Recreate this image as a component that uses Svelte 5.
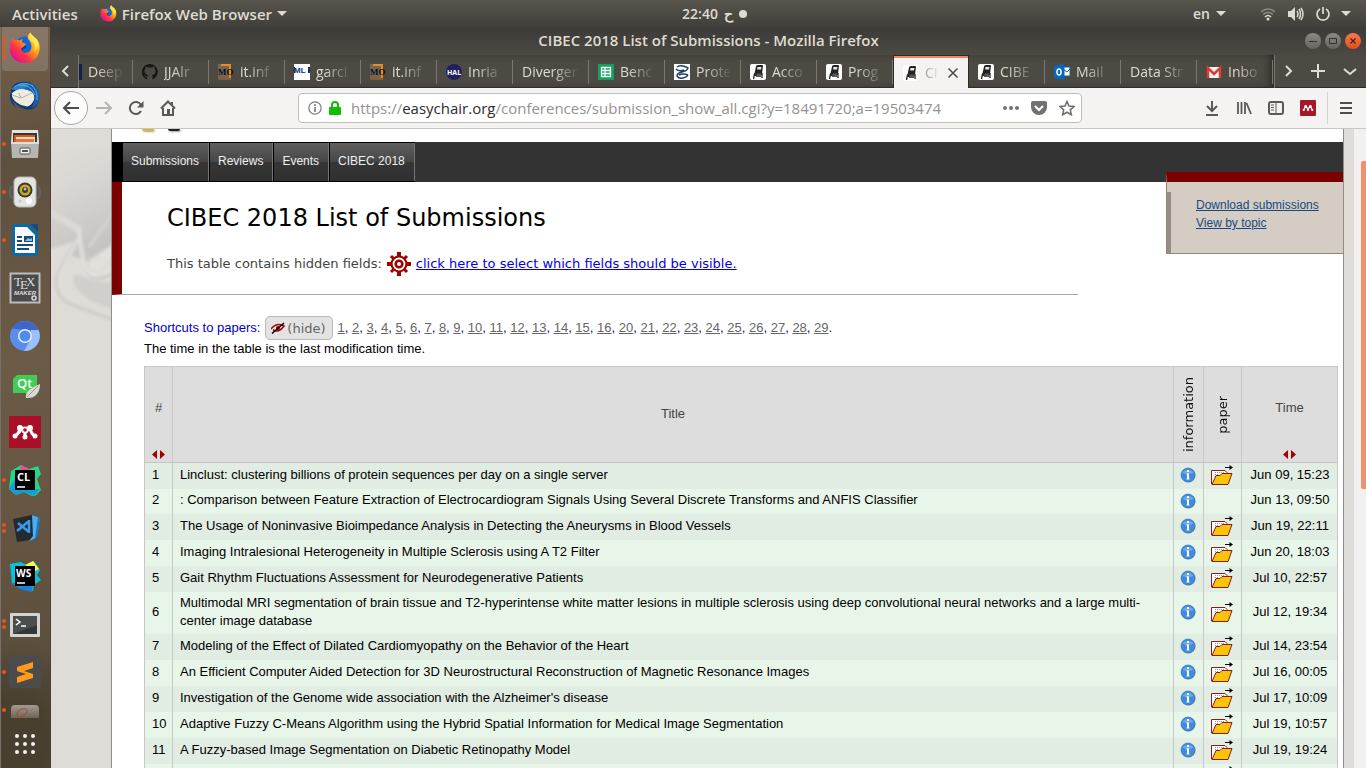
<script>
  const tabs = [
    { icon: 'deep', label: 'Deep' },
    { icon: 'github', label: 'JJAlr' },
    { icon: 'mo', label: 'it.inf' },
    { icon: 'pmlr', label: 'garci' },
    { icon: 'mo', label: 'it.inf' },
    { icon: 'hal', label: 'Inria' },
    { icon: '', label: 'Diverger' },
    { icon: 'sheet', label: 'Benc' },
    { icon: 'prot', label: 'Prote' },
    { icon: 'chair', label: 'Acco' },
    { icon: 'chair', label: 'Prog' },
    { icon: 'chair', label: 'CI', active: true },
    { icon: 'chair', label: 'CIBE' },
    { icon: 'outlook', label: 'Mail' },
    { icon: '', label: 'Data Str' },
    { icon: 'gmail', label: 'Inbo' }
  ];

  const dock = [
    { name: 'firefox', dots: 4, on: true },
    { name: 'thunderbird', dots: 0 },
    { name: 'files', dots: 1 },
    { name: 'music', dots: 1 },
    { name: 'writer', dots: 1 },
    { name: 'tex', dots: 0 },
    { name: 'chromium', dots: 0 },
    { name: 'qt', dots: 0 },
    { name: 'mendeley', dots: 0 },
    { name: 'clion', dots: 1 },
    { name: 'code', dots: 2 },
    { name: 'webstorm', dots: 0 },
    { name: 'terminal', dots: 2 },
    { name: 'sublime', dots: 1 }
  ];

  const papers = [1, 2, 3, 4, 5, 6, 7, 8, 9, 10, 11, 12, 13, 14, 15, 16, 20, 21, 22, 23, 24, 25, 26, 27, 28, 29];

  const rows = [
    ['1', 'Linclust: clustering billions of protein sequences per day on a single server', true, 'Jun 09, 15:23'],
    ['2', ': Comparison between Feature Extraction of Electrocardiogram Signals Using Several Discrete Transforms and ANFIS Classifier', false, 'Jun 13, 09:50'],
    ['3', 'The Usage of Noninvasive Bioimpedance Analysis in Detecting the Aneurysms in Blood Vessels', true, 'Jun 19, 22:11'],
    ['4', 'Imaging Intralesional Heterogeneity in Multiple Sclerosis using A T2 Filter', true, 'Jun 20, 18:03'],
    ['5', 'Gait Rhythm Fluctuations Assessment for Neurodegenerative Patients', true, 'Jul 10, 22:57'],
    ['6', 'Multimodal MRI segmentation of brain tissue and T2-hyperintense white matter lesions in multiple sclerosis using deep convolutional neural networks and a large multi-center image database', true, 'Jul 12, 19:34'],
    ['7', 'Modeling of the Effect of Dilated Cardiomyopathy on the Behavior of the Heart', true, 'Jul 14, 23:54'],
    ['8', 'An Efficient Computer Aided Detection for 3D Neurostructural Reconstruction of Magnetic Resonance Images', true, 'Jul 16, 00:05'],
    ['9', "Investigation of the Genome wide association with the Alzheimer's disease", true, 'Jul 17, 10:09'],
    ['10', 'Adaptive Fuzzy C-Means Algorithm using the Hybrid Spatial Information for Medical Image Segmentation', true, 'Jul 19, 10:57'],
    ['11', 'A Fuzzy-based Image Segmentation on Diabetic Retinopathy Model', true, 'Jul 19, 19:24'],
    ['', '', true, '']
  ];
</script>

{#snippet firefox(size)}
  <svg width={size} height={size} viewBox="0 0 32 32" aria-hidden="true">
    <defs>
      <linearGradient id="fx{size}" x1="0.85" y1="0.1" x2="0.15" y2="0.85">
        <stop offset="0" stop-color="#ffe63a" /><stop offset=".4" stop-color="#ff9a12" /><stop offset=".7" stop-color="#ff3647" /><stop offset="1" stop-color="#e3158a" />
      </linearGradient>
    </defs>
    <circle cx="16" cy="15" r="10.500" fill="#1068d8" />
    <path d="M9 15c3 0 4-1 5-2 3 0 4 2 3 3l-4 2c2 4 8 4 10 0-1 6-8 8-12 4z" fill="#123b9e" />
    <path fill="url(#fx{size})" d="M2.500 8.500 4 6l1 2.500c2-1 4-1 5 0L14 7c-1 1.500-1.500 3-.5 3.500L17 12c-1 2.500-4 3-5 5 1 4 6 5 9 2 3-4 1-9-2-12-1-2 .5-5 2.500-6.500C22 4 27 5 30 11c3 9-3 20-14 20C6 31 0 24 1 15c.2-3 1-5 1.500-6.500z" />
    <path fill="#ffe84a" d="M21.500.500c-2 2.500-2 5 0 7.500 4 3 5 7 4 12 3-4 5-8 3-12C26.500 5 22.500 4 21.500.500z" />
  </svg>
{/snippet}

{#snippet dockIcon(name)}
  {#if name === 'firefox'}
    {@render firefox(32)}
  {:else}
    <svg width="32" height="32" viewBox="0 0 32 32" aria-hidden="true">
      {#if name === 'thunderbird'}
        <path d="M5 22c-5-6-4-14 1-18 7-4 17-3 22 4 4 7 3 16-3 20-4 3-13 2-20-6z" fill="#0d3a74" />
        <path d="M2 9 9 4q12-3 19 6l-2 5z" fill="#2b82cc" />
        <path d="M2 14q9-9 21-2 3 3 2 8-4 8-9 6Q5 24 2 14z" fill="#f0ebdf" />
        <path d="m3 15 9 3 11-5M12 18l-2-5" fill="none" stroke="#b5b1a5" />
        <path d="M15 9q9 1 11 8 0 6-4 11 8-2 9-12-1-10-9-13z" fill="#1a5fa8" />
        <path d="M5 7Q15 0 24 6M9 5q13-1 17 10M22 5q7 5 6 15" stroke="#5aa9e2" fill="none" />
        <path d="M1 14Q0 23 8 28q-6-6-5-15z" fill="#123b78" />
      {:else if name === 'files'}
        <path d="M3 2h26l1 13H2z" fill="#e4e4e1" /><rect x="4" y="5" width="24" height="10" fill="#3c3530" />
        <path d="M5 7h21v8H5z" fill="#d8581f" /><path d="M7 9h19v5H7z" fill="#f4dcc9" /><path d="M7 11h18v3H7z" fill="#e47738" />
        <path d="M2 14h28l-1 16H3z" fill="#b5b5b2" /><path d="M2 14h28v2H2z" fill="#dededb" />
        <rect x="11" y="20" width="10" height="6" rx="1" fill="#eee" stroke="#555" /><path d="M13 22h6v2h-6z" fill="#555" />
      {:else if name === 'music'}
        <path d="M3 10q-4 6 0 13M29 10q4 6 0 13" fill="none" stroke="#5f656b" stroke-width="2" />
        <rect x="5" y="1" width="22" height="30" rx="5" fill="#e4e4e2" stroke="#b6b6b2" />
        <circle cx="16" cy="14" r="7.500" fill="#38393a" /><circle cx="16" cy="14" r="5.500" fill="#d0aa1d" /><circle cx="16" cy="14" r="3" fill="#3c3b35" /><circle cx="16" cy="13" r="1.500" fill="#bbb" />
        <circle cx="20" cy="25" r="3" fill="#fff" /><circle cx="11" cy="25" r="1.500" fill="#c8c8c6" />
      {:else if name === 'writer'}
        <path d="M3 2Q3 0 5 0h15l9 9v20q0 3-3 3H6q-3 0-3-3z" fill="#0d69a2" /><path d="M21 0h8v8z" fill="#0f4f7d" />
        <path d="M6 3h12l8 8v18H6z" fill="#fafafa" />
        <path d="M8 13h5M8 17h5M8 21h16M8 25h12" stroke="#174b78" stroke-width="2" /><rect x="15" y="12" width="9" height="6" fill="#174b78" /><path d="m16 17 3-3 2 1 2-1v3z" fill="#8bc2e8" />
      {:else if name === 'tex'}
        <rect x="1.500" y="1.500" width="29" height="29" fill="#4b4b4b" stroke="#bdbdbd" stroke-width="2" />
        <text x="5" y="14" font-family="Liberation Serif" font-size="13" fill="#ddd">T<tspan dx="-2" dy="3">E</tspan><tspan dx="-2" dy="-3">X</tspan></text>
        <text x="5" y="23" font-family="Liberation Sans" font-size="6" font-weight="bold" font-style="italic" fill="#ddd">MAKER</text><circle cx="25" cy="26" r="2" fill="none" stroke="#ddd" stroke-width="1.500" />
      {:else if name === 'chromium'}
        <circle cx="16" cy="16" r="15" fill="#5b8def" /><path d="M3 8.500a15 15 0 0 1 26.500 1.500H16z" fill="#3c66cc" /><path d="M29.500 10A15 15 0 0 1 15 31l7-12V10z" fill="#9dc0f8" />
        <circle cx="16" cy="16" r="7" fill="#e8f0fd" /><circle cx="16" cy="16" r="5.500" fill="#4e8bf0" />
      {:else if name === 'qt'}
        <path d="M8 7h20v18H4V11z" fill="#41cd52" /><text x="8" y="20" font-family="Open Sans" font-weight="600" font-size="13" fill="#fff">Qt</text>
        <path d="M31 16c0 8-4 15-14 14-1-6 3-9 14-14z" fill="#d8d8d5" /><path d="M29 18 18 29" stroke="#999" fill="none" />
      {:else if name === 'mendeley'}
        <rect width="32" height="32" fill="#a90f27" />
        <path d="M6 20q4-2 5-8l5 4 5-4q1 6 5 8M12 12q-1 5-6 8M16 20v-5" stroke="#fff" stroke-width="3" fill="none" /><circle cx="16" cy="14" r="3.500" fill="#fff" /><circle cx="16" cy="14" r="1.800" fill="#a90f27" />
        <circle cx="6" cy="20" r="2.500" fill="#fff" /><circle cx="16" cy="21" r="2.500" fill="#fff" /><circle cx="26" cy="20" r="2.500" fill="#fff" /><circle cx="11" cy="12" r="3" fill="#fff" /><circle cx="21" cy="12" r="3" fill="#fff" />
      {:else if name === 'clion'}
        <path d="m2 7 10-6 8 4 9-3 3 8-4 5 4 11-7 7-10-5-8 3-7-6z" fill="#21d789" /><path d="m12 1 8 4-6 9-3-6z" fill="#f0489b" /><path d="m0 25 9-15v16l22-1-6 7-10-4-8 3z" fill="#169ad8" />
        <rect x="6" y="6" width="20" height="20" /><text x="8" y="17" font-family="Open Sans" font-weight="bold" font-size="11" fill="#fff">CL</text><path d="M8 23h8" stroke="#fff" stroke-width="1.500" />
      {:else if name === 'code'}
        <path d="m4 7 19-4 8 3-3 21L8 30z" fill="#252a30" /><path d="m23 3 8 3-3 20-8 3 4-5z" fill="#4aaef5" /><path d="m26 27 2-1 3-20-2-1z" fill="#1875c0" />
        <path d="M20 9 8 19M9 11l11 9M20 8v13" stroke="#3b9be8" stroke-width="2.500" fill="none" />
      {:else if name === 'webstorm'}
        <path d="m1 4 11-2 5 3 8-4 6 9-3 5 4 5-7 5-1 6-13-3-8-5z" fill="#07c3de" /><path d="m16 5 8-4 6 8-4 2z" fill="#fcf84a" /><path d="m2 23 22-1-1 10-12-3z" fill="#1b83dc" />
        <rect x="6" y="6" width="20" height="20" /><text x="7" y="17" font-family="Open Sans" font-weight="bold" font-size="10" fill="#fff">WS</text><path d="M8 23h8" stroke="#fff" stroke-width="1.500" />
      {:else if name === 'terminal'}
        <rect x="1" y="5" width="30" height="24" rx="1" fill="#d3d3d1" /><rect x="4" y="8" width="24" height="18" fill="#333738" /><path d="M4 8h24v9L4 26z" fill="#4a4e4f" /><path d="m7 11 4 3-4 3M12 18h5" stroke="#fff" stroke-width="1.500" fill="none" />
      {:else if name === 'sublime'}
        <rect width="32" height="32" rx="3" fill="#4b4b4b" /><path d="m8 11 16-5v6l-9 3 9 3v4L8 27v-6l9-3-9-3z" fill="#ff9a1b" />
      {/if}
    </svg>
  {/if}
{/snippet}

{#snippet favicon(name)}
  <svg width="16" height="16" viewBox="0 0 16 16" aria-hidden="true">
    {#if name === 'deep'}
      <rect width="16" height="16" fill="#0b2447" />
    {:else if name === 'github'}
      <path fill="#171717" d="M8 0a8 8 0 0 0-3 15.500V13C3 13.500 2.500 12 2 11.500c1.500-.5 1.500 1.500 3.500 1l.5-1.500C3.500 10.500 2.500 9 2.500 7c0-1 .5-2 1-2.500V2.500c1 0 2 .7 2.500 1h4c.5-.3 1.500-1 2.500-1v2c.5.5 1 1.500 1 2.500 0 2-1 3.500-3.500 4l.5 1.500v3A8 8 0 0 0 8 0z" />
    {:else if name === 'mo'}
      <rect width="13" height="16" fill="#6f665c" /><path d="M3 1h9v14" fill="none" stroke="#e98a25" stroke-width="2" /><path d="M0 15h13" stroke="#8f5a2a" stroke-width="2" /><text x="0" y="11" font-family="Liberation Serif" font-weight="bold" font-size="9" fill="#120d08">MO</text>
    {:else if name === 'pmlr'}
      <rect width="16" height="16" fill="#fff" /><text x="0" y="9" font-family="Liberation Sans" font-weight="bold" font-size="8" fill="#14306e">ML</text><path d="M0 3h1v6H0zM14 3h2v6h-2z" fill="#14306e" />
    {:else if name === 'hal'}
      <circle cx="8" cy="8" r="8" fill="#22215f" /><text x="1" y="11" font-family="Open Sans" font-weight="bold" font-size="7" fill="#fff">HAL</text>
    {:else if name === 'sheet'}
      <rect width="16" height="16" rx="1" fill="#12a15e" /><path d="M3.500 3.500h9v9h-9zM3.500 6.500h9M3.500 9.500h9M7 3v9" fill="none" stroke="#fff" stroke-width="1.300" />
    {:else if name === 'prot'}
      <rect width="16" height="16" fill="#fff" /><path d="M3 3q2-2 6-1t5 2q-1 3-6 4t-5 4q2 3 6 2t5-3M2 5q3 3 8 1M5 11q4-2 9 0" fill="none" stroke="#1c4268" stroke-width="1.500" />
    {:else if name === 'chair'}
      <rect width="16" height="16" rx="2" fill="#fff" /><path d="M6 2.500Q6 1 8 1h4q1 0 1 1l-1 7.500H4.500z" fill="#222" /><path d="M7.500 3h4L11 5.500H7z" fill="#e6e6e6" /><path d="M4 10h8.500M4.500 10l-1 5M12 9v5M6 12h5M6.500 8l-1 4" stroke="#222" stroke-width="1.300" fill="none" />
    {:else if name === 'outlook'}
      <path d="m0 2 10-2v16L0 14z" fill="#0668bd" /><rect x="10" y="3" width="6" height="9" fill="#fff" stroke="#0668bd" /><path d="m10 6 3 2 3-3" stroke="#0668bd" fill="none" /><ellipse cx="5" cy="8" rx="2" ry="3" fill="none" stroke="#fff" stroke-width="1.500" />
    {:else if name === 'gmail'}
      <path d="M1 3h14v11H1z" fill="#f1efec" /><path d="M2 14V4l6 6 6-6v10" stroke="#d93f32" stroke-width="2.500" fill="none" />
    {/if}
  </svg>
{/snippet}

<div class="screen">
  <header class="panel">
    <div class="left">
      <button>Activities</button>
      <button class="app">{@render firefox(17)}<span>Firefox Web Browser</span><i class="caret"></i></button>
    </div>
    <div class="clock"><span>22:40</span><span>ح</span><i class="bead"></i></div>
    <div class="right">
      <span>en</span><i class="caret"></i>
      <svg class="wifi" width="16" height="16" viewBox="0 0 16 16" fill="none" stroke="#8c8a84" stroke-width="1.500" aria-hidden="true"><path d="M1 6q7-6 14 0M3 8.500q5-4 10 0" /><path d="M5 11q3-3 6 0" stroke="#dfdbd2" /><circle cx="8" cy="13" r="1.500" fill="#dfdbd2" stroke="none" /></svg>
      <svg width="18" height="16" viewBox="0 0 18 16" fill="none" stroke="#dfdbd2" stroke-width="1.500" aria-hidden="true"><path d="M1 5h3l4-4v14l-4-4H1z" fill="#dfdbd2" stroke="none" /><path d="M10 5q2 3 0 6M12 3q3 5 0 10M14 2q4 6 0 12" /></svg>
      <svg class="power" width="16" height="16" viewBox="0 0 16 16" fill="none" stroke="#dfdbd2" stroke-width="1.700" aria-hidden="true"><path d="M5 3a6 6 0 1 0 6 0M8 1v7" /></svg>
      <i class="caret"></i>
    </div>
  </header>

  <nav class="dock">
    {#each dock as d}
      <button class:on={d.on} aria-label={d.name}>
        <span class="dots">{#each Array(d.dots) as _}<i></i>{/each}</span>
        {@render dockIcon(d.name)}
      </button>
    {/each}
    <button class="faded" aria-label="document viewer">
      <span class="dots"><i></i></span>
      <svg width="28" height="14" viewBox="0 0 28 14" aria-hidden="true"><defs><linearGradient id="fade" x1="0" y1="0" x2="0" y2="1"><stop offset="0" stop-color="#a29b92" /><stop offset="1" stop-color="#706356" /></linearGradient></defs><path d="M0 14V5q0-4 4-4h20q4 0 4 4v9z" fill="url(#fade)" /><path d="M7 14q-3-7 4-9 6-1 5 3-2 4-7 5" stroke="#a5483f" fill="none" /></svg>
    </button>
    <button class="grid" aria-label="applications">
      <svg width="20" height="20" viewBox="0 0 20 20" fill="#f2f1ef" aria-hidden="true">{#each [2, 10, 18] as y}{#each [2, 10, 18] as x}<circle cx={x} cy={y} r="2" />{/each}{/each}</svg>
    </button>
  </nav>

  <main class="browser">
    <div class="titlebar">
      <b>CIBEC 2018 List of Submissions - Mozilla Firefox</b>
      <div class="wm">
        <button aria-label="minimize"><svg width="8" height="8" viewBox="0 0 8 8"><path d="M0 4.500h8" stroke="#33322e" /></svg></button>
        <button aria-label="maximize"><svg width="8" height="8" viewBox="0 0 8 8"><path d="M.5 1.500h7v5h-7z" fill="none" stroke="#33322e" /></svg></button>
        <button class="close" aria-label="close"><svg width="8" height="8" viewBox="0 0 8 8"><path d="m1.500 1.500 5 5m0-5-5 5" stroke="#4b2013" stroke-width="1.200" /></svg></button>
      </div>
    </div>

    <div class="tabbar">
      <button class="scroll" aria-label="previous tabs"><svg width="10" height="14" viewBox="0 0 10 14"><path d="M8 2 3 7l5 5" fill="none" stroke="#dedbd4" stroke-width="2" /></svg></button>
      <div class="tabs">
        {#each tabs as t}
          <button class="tab" class:active={t.active}>
            {#if t.icon}{@render favicon(t.icon)}{/if}
            <span>{t.label}</span>
            {#if t.active}<svg width="12" height="12" viewBox="0 0 12 12" aria-hidden="true"><path d="m1.500 1.500 9 9m0-9-9 9" stroke="#4b4945" stroke-width="1.500" /></svg>{/if}
          </button>
        {/each}
      </div>
      <button class="scroll" aria-label="next tabs"><svg width="10" height="14" viewBox="0 0 10 14"><path d="m2 2 5 5-5 5" fill="none" stroke="#dedbd4" stroke-width="2" /></svg></button>
      <button class="plus" aria-label="new tab"><svg width="14" height="14" viewBox="0 0 14 14"><path d="M7 0v14M0 7h14" stroke="#dedbd4" stroke-width="2" /></svg></button>
      <button class="plus" aria-label="all tabs"><svg width="14" height="14" viewBox="0 0 14 14"><path d="m1 5 6 5 6-5" fill="none" stroke="#dedbd4" stroke-width="2" /></svg></button>
    </div>

    <div class="toolbar">
      <button class="back" aria-label="back"><svg width="18" height="18" viewBox="0 0 18 18"><path d="M17 9H2M8 3 2 9l6 6" fill="none" stroke="#4d4c4a" stroke-width="2" /></svg></button>
      <button aria-label="forward"><svg width="18" height="18" viewBox="0 0 18 18"><path d="M1 9h15M10 3l6 6-6 6" fill="none" stroke="#b4b3b1" stroke-width="2" /></svg></button>
      <button aria-label="reload"><svg width="16" height="16" viewBox="0 0 16 16"><path d="M13 11a6 6 0 1 1 0-6" fill="none" stroke="#5a5957" stroke-width="2" /><path d="M15.500 1v6.500H9z" fill="#5a5957" /></svg></button>
      <button aria-label="home"><svg width="16" height="16" viewBox="0 0 16 16"><path d="m1 8.500 7-7 7 7M3 8v7h10V8M12 2v3" fill="none" stroke="#5a5957" stroke-width="2" /><path d="M7 9h3v6H7z" fill="#5a5957" /></svg></button>
      <div class="gap"></div>
      <div class="url">
        <svg width="14" height="14" viewBox="0 0 14 14" aria-hidden="true"><circle cx="7" cy="7" r="6.200" fill="none" stroke="#7c7b79" stroke-width="1.200" /><path d="M7 6v5M7 3v2" stroke="#7c7b79" stroke-width="1.600" /></svg>
        <svg width="12" height="14" viewBox="0 0 12 14" aria-hidden="true"><path d="M3 7V4a3 3 0 0 1 6 0v3" fill="none" stroke="#12bc00" stroke-width="2" /><rect y="6" width="12" height="8" rx="1" fill="#12bc00" /></svg>
        <div class="address">https://<em>easychair.org</em>/conferences/submission_show_all.cgi?y=18491720;a=19503474</div>
        <svg width="16" height="4" viewBox="0 0 16 4" fill="#737270" aria-hidden="true"><circle cx="2" cy="2" r="2" /><circle cx="8" cy="2" r="2" /><circle cx="14" cy="2" r="2" /></svg>
        <svg width="16" height="14" viewBox="0 0 16 14" aria-hidden="true"><path d="M0 2q0-2 2-2h12q2 0 2 2v4a8 8 0 0 1-16 0z" fill="#737270" /><path d="m4 5 4 4 4-4" fill="none" stroke="#fff" stroke-width="2" /></svg>
        <svg width="16" height="16" viewBox="0 0 16 16" aria-hidden="true"><path d="m8 1.500 2 4.500 5 .5-3.700 3.300 1 4.900L8 12.200l-4.300 2.500 1-4.900L1 6.500 6 6z" fill="none" stroke="#6f6e6c" stroke-width="1.600" /></svg>
      </div>
      <div class="gap"></div>
      <button aria-label="downloads"><svg width="16" height="16" viewBox="0 0 16 16"><path d="M8 1v10M3 6l5 5 5-5M2 15h12" fill="none" stroke="#5a5957" stroke-width="2" /></svg></button>
      <button aria-label="library"><svg width="16" height="16" viewBox="0 0 16 16"><path d="M2 2v12M5.500 2v12M9 2v12M10.500 3 15 14" fill="none" stroke="#5a5957" stroke-width="1.800" /></svg></button>
      <button aria-label="sidebars"><svg width="16" height="16" viewBox="0 0 16 16"><rect x="1" y="2" width="14" height="12" rx="2" fill="none" stroke="#5a5957" stroke-width="2" /><path d="M8 2v12M3 5h3M3 7.500h3M3 10h3" stroke="#5a5957" /></svg></button>
      <button aria-label="mendeley"><svg width="16" height="16" viewBox="0 0 16 16"><rect width="16" height="16" rx="1" fill="#a3182b" /><path d="M3.500 10 5.500 7 8 8.500 10.500 7l2 3M8 10V8" stroke="#fff" stroke-width="1.300" fill="none" /><g fill="#fff"><circle cx="5.700" cy="6.500" r="1.400" /><circle cx="10.300" cy="6.500" r="1.400" /><circle cx="3.700" cy="10" r="1.100" /><circle cx="8" cy="10" r="1.100" /><circle cx="12.300" cy="10" r="1.100" /></g></svg></button>
      <button class="menu" aria-label="menu"><svg width="12" height="12" viewBox="0 0 12 12"><path d="M0 1h12M0 6h12M0 11h12" stroke="#4d4c4a" stroke-width="2" /></svg></button>
    </div>

    <div class="view">
      <svg class="swirl" width="60" height="230" viewBox="0 0 60 230" fill="none" aria-hidden="true">
        <defs>
          <linearGradient id="sw" x1="0" y1="0" x2="0.3" y2="1"><stop offset="0" stop-color="#dfdcd7" /><stop offset=".3" stop-color="#dcd9d5" /><stop offset="1" stop-color="#c6c4c1" /></linearGradient>
          <filter id="soft"><feGaussianBlur stdDeviation="1.500" /></filter>
        </defs>
        <g filter="url(#soft)">
          <path d="M-4 20h68v94l-28 18L-4 118z" fill="url(#sw)" />
          <path d="M-2 82 30 102" stroke="#dbd9d6" stroke-width="7" />
          <path d="M62 84 38 118" stroke="#d5d3d0" stroke-width="3" />
          <path d="M-4 121 24 112 10 145q-4 22 6 30l-20-10z" fill="#dfdcd7" />
          <path d="M36 138q12-14 26-22v10l-16 16z" fill="#e2e0dc" />
          <path d="M26 112 7 146q-4 20 12 28l43 16" stroke="#cfcdc9" stroke-width="5" />
          <path d="M27 110 9 145q-4 20 12 27l41 15" stroke="#e0deda" stroke-width="3" />
          <path d="M22 150q0-8 12-2 10 8 28 4v28q-36-10-40-30z" fill="#d1cfcb" />
          <path d="M29 98q2 44 14 50 8 2 19-6" stroke="#c8c6c2" stroke-width="5" />
          <path d="M28 98q2 42 14 48 8 2 20-6" stroke="#e2e0dc" stroke-width="4" />
        </g>
      </svg>
      <div class="page">
        <div class="logo"><i></i><i></i></div>
        <div class="nav">
          <a href="#submissions">Submissions</a><a href="#reviews">Reviews</a><a href="#events">Events</a><a href="#cibec">CIBEC 2018</a>
        </div>
        <aside>
          <a href="#download">Download submissions</a>
          <a href="#topic">View by topic</a>
        </aside>
        <section class="head">
          <h1>CIBEC 2018 List of Submissions</h1>
          <p>
            <span>This table contains hidden fields:</span>
            <svg width="24" height="24" viewBox="0 0 24 24" aria-hidden="true"><g stroke="#a00000" stroke-width="4"><path d="M12 0v24M0 12h24" /><path d="M4 4l16 16M20 4 4 20" stroke-width="3" /></g><circle cx="12" cy="12" r="8.500" fill="#a00000" /><circle cx="12" cy="12" r="5.500" fill="none" stroke="#fff" stroke-width="1.800" /><circle cx="12" cy="12" r="2" fill="#fff" /></svg>
            <a href="#fields">click here to select which fields should be visible.</a>
          </p>
        </section>

        <section class="body">
          <div class="short">
            <span>Shortcuts to papers:</span>
            <button><svg width="14" height="12" viewBox="0 0 14 12" aria-hidden="true"><path d="M0 7q6-7 13-3Q8 11 2 8" fill="none" stroke="#a00000" stroke-width="1.500" /><circle cx="7" cy="6" r="2" fill="#a00000" /><path d="M1 11.500 13 1" stroke="#000" stroke-width="1.500" /></svg>(hide)</button>
            <span>{#each papers as p, i}<a href="#p{p}">{p}</a>{i < papers.length - 1 ? ', ' : '.'}{/each}</span>
          </div>
          <div class="note">The time in the table is the last modification time.</div>

          <table>
            <thead>
              <tr>
                <th class="n"><div class="sort"><span>#</span><svg width="13" height="9" viewBox="0 0 13 9" fill="#a00000" aria-hidden="true"><path d="M5 0v9L0 4.500zM8 0v9l5-4.500z" /></svg></div></th>
                <th class="title">Title</th>
                <th class="i"><span class="up">information</span></th>
                <th class="f"><span class="up">paper</span></th>
                <th class="t"><div class="sort"><span>Time</span><svg width="13" height="9" viewBox="0 0 13 9" fill="#a00000" aria-hidden="true"><path d="M5 0v9L0 4.500zM8 0v9l5-4.500z" /></svg></div></th>
              </tr>
            </thead>
            <tbody>
              {#each rows as [n, title, paper, time]}
                <tr class:bare={!paper}>
                  <td>{n}</td>
                  <td>{title}</td>
                  <td class="ic"><svg width="16" height="16" viewBox="0 0 16 16" aria-hidden="true"><circle cx="8.500" cy="8.500" r="7" fill="#8b9aa5" /><circle cx="8" cy="8" r="7" fill="#3f8bdc" stroke="#2f6fba" stroke-width=".6" /><path d="M2.500 6a6 5 0 0 1 11 0q-5 2-11 0z" fill="#6fa9e8" /><path d="M8 6.500v5.500M8 3v2" stroke="#fff" stroke-width="2" fill="none" /><path d="M6.500 7H8M6.500 12h3" stroke="#fff" /></svg></td>
                  <td class="ic">{#if paper}<svg width="22" height="20" viewBox="0 0 22 20" aria-hidden="true"><path d="M.5 19V5.500H14l2 2V10" fill="#fff" stroke="#8b1a1a" /><path d="M4 7.500h9M4 9.500h4" stroke="#999" stroke-dasharray="1 1" /><path d="m1 19.500 4-9h4l2-2h10l-4 11z" fill="#fbc507" stroke="#8b1a1a" /><path d="M14 2.500h7" stroke="#000" /><path d="M18.500 0 22 2.500 18.500 5z" /></svg>{/if}</td>
                  <td class="tm">{time}</td>
                </tr>
              {/each}
            </tbody>
          </table>
        </section>
      </div>
      <div class="bar"><i></i></div>
    </div>
  </main>
</div>

<style>
  :global(body) { margin: 0; overflow: hidden; }
  .screen { display: grid; grid-template: 27px minmax(0, 1fr) / 51px minmax(0, 1fr); height: 100vh; overflow: hidden; font: 14px/20px "Open Sans", "Noto Sans", sans-serif; }
  button { border: 0; padding: 0; margin: 0; background: none; font: inherit; color: inherit; }
  svg { display: block; flex: none; }
  .screen i { display: block; flex: none; }

  .panel { grid-column: 1 / -1; display: grid; grid-template-columns: 1fr auto 1fr; align-items: center; padding: 0 15px 0 12px; background: linear-gradient(#58554d, #403f3a); color: #dfdbd2; font-weight: 600; }
  .left, .right, .clock, .app { display: flex; align-items: center; }
  .left { gap: 22px; font-size: 15px; }
  .app { gap: 5px; }
  .caret { border: solid transparent; border-width: 5px 5px 0; border-top-color: #dfdbd2; }
  .clock { gap: 6px; padding-left: 66px; }
  .bead { width: 8px; height: 8px; border-radius: 50%; background: #dfdbd2; }
  .right { justify-content: flex-end; gap: 6px; }
  .wifi { margin-left: 28px; }
  .right .power { margin: 0 4px 0 4px; }
  .wifi + svg { margin-left: 5px; }

  .dock { display: flex; flex-direction: column; background: linear-gradient(90deg, #77706a 1px, transparent 1px), radial-gradient(circle at 20% 96%, #48402f 0 5%, transparent 14%), linear-gradient(170deg, #75604c, #5e503f 18%, #6c5b46 45%, #625340 75%, #51473a); border-right: 1px solid #4a4136; box-sizing: border-box; }
  .dock button { position: relative; box-sizing: border-box; display: flex; align-items: center; justify-content: center; height: 44px; margin: 0 2px 4px; padding-bottom: 2px; flex: none; }
  .dock .on { background: #ffffff26; border-radius: 0 0 4px 4px; }
  .dots { position: absolute; left: 0; top: 0; bottom: 2px; display: flex; flex-direction: column; justify-content: center; gap: 2px; }
  .dots i { width: 4px; height: 4px; border-radius: 50%; background: #e95420; }
  .dock .faded { height: 14px; margin-top: 5px; padding: 0; }
  .dock .grid { height: 20px; margin-top: 12px; padding: 0; }

  .browser { display: grid; grid-template: 28px 33px 41px minmax(0, 1fr) / minmax(0, 1fr); min-width: 0; }
  .titlebar { display: flex; align-items: center; background: linear-gradient(#3c3b37, #4b4943); color: #dfdbd2; padding: 0 5px; }
  .titlebar b { flex: 1; text-align: center; padding: 0 0 2px 56px; font-weight: 600; font-size: 15px; }
  .wm { display: flex; gap: 4px; }
  .wm button { width: 16px; height: 16px; border-radius: 50%; background: linear-gradient(#8c8a84, #66645d); display: grid; place-items: center; }
  .wm .close { background: linear-gradient(#f4794f, #e04f1d); }

  .tabbar { display: flex; background: #4d4a43; color: #dedbd4; border-bottom: 1px solid #2d2c28; }
  .scroll { width: 27px; display: grid; place-items: center; }
  .plus { width: 32px; display: grid; place-items: center; }
  .tabs { flex: 1; min-width: 0; display: flex; overflow: hidden; border: solid #7b7871; border-width: 0 1px; margin-bottom: -1px; box-shadow: inset -6px 0 8px -2px #2d2b27; }
  .tab { flex: 0 0 76px; min-width: 0; box-sizing: border-box; display: flex; align-items: center; gap: 6px; padding: 2px 9px 0; text-align: left; background: linear-gradient(#7b7871, #7b7871) right 5px / 1px 24px no-repeat; border-bottom: 1px solid #2d2c28; }
  .tab:first-child { margin-left: -22px; }
  .tab span { flex: 1; min-width: 0; overflow: hidden; white-space: nowrap; mask: linear-gradient(90deg, #000 calc(100% - 28px), transparent); }
  .tabs .active { background: #f4f3f2; color: #55534f; border: 1px solid #2d2c28; border-width: 1px 1px 0; box-shadow: inset 0 2px #f0855b; }
  .active span { mask: linear-gradient(90deg, #0008, transparent); }

  .toolbar { display: flex; align-items: center; background: #f4f3f2; border-bottom: 1px solid #c9c6c2; padding: 0 3px; box-sizing: border-box; }
  .toolbar button { width: 32px; height: 32px; display: grid; place-items: center; flex: none; }
  .toolbar .back { width: 34px; height: 34px; box-sizing: border-box; border: 1px solid #a8a6a3; border-radius: 50%; background: #fcfcfc; }
  .gap { flex: 0 1 114px; }
  .url { flex: 1 1 500px; min-width: 0; height: 30px; box-sizing: border-box; display: flex; align-items: center; gap: 7px; padding: 0 6px 0 9px; border: 1px solid #c0bdb9; border-radius: 4px; background: #fff; }
  .url svg:nth-of-type(n + 3) { margin-left: 5px; }
  .address { flex: 1; min-width: 0; overflow: hidden; white-space: nowrap; color: #949290; font-size: 15px; padding-left: 3px; }
  .address em { font-style: normal; color: #2e2d2b; }
  .toolbar .menu { border-left: 1px solid #d6d4d1; margin-left: 3px; width: 36px; }

  .view { position: relative; display: flex; overflow: hidden; background: #dfdcd7; padding-left: 60px; }
  .swirl { position: absolute; left: 0; top: 0; }
  .page { position: relative; flex: 1; min-width: 0; background: #fff; border: solid #8f8d8a; border-width: 0 1px; margin-right: 10px; font: 13px/18px "Liberation Sans", sans-serif; }
  .bar { width: 12px; background: #f2f1f0; padding: 32px 0 0 7px; box-sizing: border-box; }
  .bar i { height: 328px; background: #f1906a; border-radius: 2px 0 0 2px; }

  .logo { height: 13px; display: flex; gap: 14px; padding-left: 30px; box-sizing: border-box; align-items: flex-start; }
  .logo i { width: 12px; height: 2px; background: #dcb62c; border-radius: 0 0 6px 6px; box-shadow: 1px 1px 2px #999; }
  .logo i + i { background: #222; }
  .nav { display: flex; height: 40px; background: #333; font-size: 12px; box-sizing: border-box; border-left: 11px solid #000; line-height: 36px; }
  .nav a { color: #eee; text-decoration: none; padding: 0 10px 0 8px; border: solid #000; border-width: 1px 1px 1px 0; box-shadow: inset -1px 0 #777; background: linear-gradient(#606060, #454545 50%, #363636 51%, #303030); }
  .nav a:last-child { border-right: 0; }
  aside { position: absolute; right: 0; top: 43px; width: 177px; height: 82px; box-sizing: border-box; background: linear-gradient(#968d84, #968d84) 0 10px / 4px 100% no-repeat #d5cdc4; border-top: 10px solid #7b0000; border-left: 1px solid #968670; border-bottom: 1px solid #968670; padding: 14px 0 0 29px; font-size: 12px; }
  aside a { display: block; color: #174a80; }
  .head { margin-right: 265px; height: 113px; box-sizing: border-box; border-left: 10px solid #7b0000; border-bottom: 1px solid #aaa; padding: 21px 0 0 45px; font: 13px/24px "DejaVu Sans", sans-serif; color: #444; }
  h1 { font: 24px/30px "DejaVu Sans", sans-serif; color: #000; margin: 0; }
  .head p { display: flex; align-items: center; gap: 5px; margin: 19px 0 0; }
  .head a { color: #00e; }
  .body { padding: 21px 5px 0 32px; }
  .short { display: flex; align-items: center; gap: 5px; color: #0000c8; height: 24px; }
  .short a { color: #666; }
  .short button { display: flex; align-items: center; gap: 2px; height: 24px; padding: 0 6px 0 5px; border: 1px solid #b8b8b8; border-radius: 5px; background: #e3e3e3; color: #666; font: 13px "DejaVu Sans", sans-serif; }
  .note { margin: 0 0 8px; }
  table { width: 100%; border-collapse: collapse; table-layout: fixed; }
  th { height: 96px; padding: 0; box-sizing: border-box; background: #ddd; color: #444; font-weight: 400; border: 1px solid #c7c7c7; }
  .n { width: 28px; } .i { width: 30px; } .f { width: 38px; } .t { width: 96px; }
  .title { padding-bottom: 2px; }
  .sort { height: 95px; display: flex; flex-direction: column; align-items: center; justify-content: space-between; padding: 32px 0 3px; box-sizing: border-box; }
  .up { display: inline-block; vertical-align: middle; writing-mode: vertical-rl; transform: rotate(180deg); font-family: "DejaVu Sans", sans-serif; color: #111; line-height: 18px; }
  td { height: 26px; box-sizing: border-box; padding: 2px 7px 4px; border: solid #c7c7c7; border-width: 0 1px; color: #000; }
  tbody tr { background: #e8f5e9; }
  tbody tr:nth-child(odd) { background: #e1ece2; }
  .bare td { height: 25px; }
  .ic { padding: 1px 1px 2px 0; }
  .ic svg { margin: auto; }
  .tm { white-space: nowrap; padding: 2px 0 4px 1px; text-align: center; }
</style>
